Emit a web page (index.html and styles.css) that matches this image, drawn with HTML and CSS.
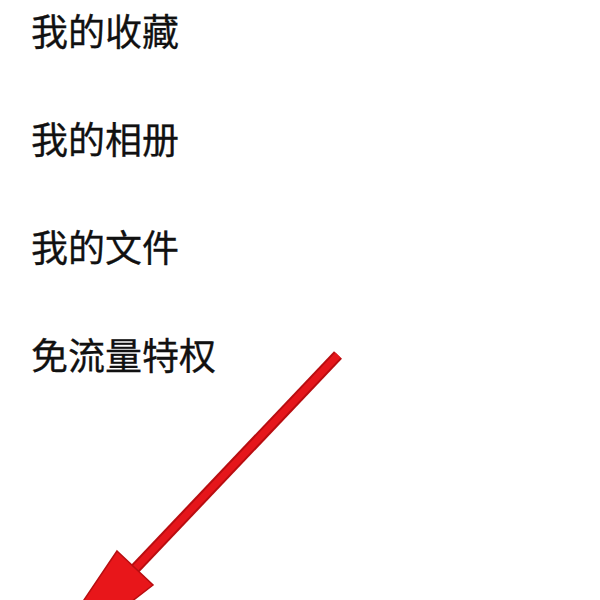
FILE: index.html
```html
<!DOCTYPE html>
<html lang="zh-CN">
<head>
<meta charset="utf-8">
<title>菜单</title>
<link rel="stylesheet" href="styles.css">
</head>
<body>
<ul class="menu">
  <li class="menu-item">我的收藏</li>
  <li class="menu-item">我的相册</li>
  <li class="menu-item">我的文件</li>
  <li class="menu-item">免流量特权</li>
</ul>
<svg class="arrow" width="600" height="600" viewBox="0 0 600 600" xmlns="http://www.w3.org/2000/svg">
  <line x1="338" y1="355" x2="130" y2="574" stroke="#b80d10" stroke-width="11" />
  <line x1="338" y1="355" x2="130" y2="574" stroke="#e5161b" stroke-width="7" />
  <polygon points="117,551 153,585 30,680" fill="#e8161a" stroke="#b80d10" stroke-width="1.5" stroke-linejoin="miter" />
</svg>
</body>
</html>
```
FILE: styles.css
```css
html, body {
  margin: 0;
  padding: 0;
  background: #ffffff;
  width: 600px;
  height: 600px;
  overflow: hidden;
  position: relative;
}

.menu {
  list-style: none;
  margin: 0;
  padding: 12px 0 0 31px;
  display: flex;
  flex-direction: column;
  gap: 71px;
  font-family: "Noto Sans CJK SC", "Noto Sans", sans-serif;
  font-size: 37px;
  line-height: 37px;
  color: #111111;
  -webkit-text-stroke: 0.3px #111111;
}

.menu-item {
  height: 37px;
  white-space: nowrap;
}

.arrow {
  position: absolute;
  left: 0;
  top: 0;
  pointer-events: none;
}
```
